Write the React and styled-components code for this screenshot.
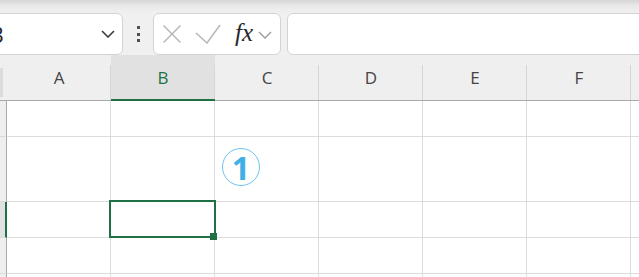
import React from 'react';
import styled, { createGlobalStyle } from 'styled-components';

const GlobalStyle = createGlobalStyle`
  html, body {
    margin: 0;
    padding: 0;
    background: #f0f0f0;
  }
  body {
    font-family: 'Open Sans', 'Liberation Sans', sans-serif;
  }
`;

const GREEN = '#1f7145';
const COLUMNS = ['A', 'B', 'C', 'D', 'E', 'F', 'G'];
const ROWS = [
  { height: 36 },
  { height: 65, note: 'C' },
  { height: 36, selected: 'B' },
  { height: 36 },
  { height: 36 },
];

function App() {
  return (
    <>
      <GlobalStyle />
      <Page>
        <TopShade />
        <FormulaBar>
          <NameBox>
            <span>B3</span>
            <svg width="14" height="8" viewBox="0 0 14 8">
              <path d="M1 1l6 6 6-6" fill="none" stroke="#3c3c3c" strokeWidth="1.6" />
            </svg>
          </NameBox>
          <Dots>
            <i />
            <i />
            <i />
          </Dots>
          <FuncBox>
            <svg width="20" height="20" viewBox="0 0 20 20">
              <path d="M1.5 1.5l17 17M18.5 1.5l-17 17" stroke="#b4b4b4" strokeWidth="1.4" fill="none" />
            </svg>
            <svg width="26" height="20" viewBox="0 0 26 20">
              <path d="M1 9l11 10L25 1" stroke="#b4b4b4" strokeWidth="1.4" fill="none" />
            </svg>
            <Fx>fx</Fx>
            <svg width="14" height="8" viewBox="0 0 14 8">
              <path d="M1 1l6 6 6-6" fill="none" stroke="#9a9a9a" strokeWidth="1.3" />
            </svg>
          </FuncBox>
          <FormulaInput />
        </FormulaBar>
        <Sheet>
          <Corner>
            <CornerEdge />
          </Corner>
          {COLUMNS.map((c, i) => (
            <ColHeader key={c} $active={c === 'B'}>
              {i < COLUMNS.length - 1 ? c : ''}
            </ColHeader>
          ))}
          {ROWS.map((row, r) => (
            <React.Fragment key={r}>
              <RowHeader $h={row.height} $active={!!row.selected} />
              {COLUMNS.map((c) => (
                <Cell key={c} $h={row.height}>
                  {row.selected === c && (
                    <Selection>
                      <Handle />
                    </Selection>
                  )}
                  {row.note === c && <Badge>1</Badge>}
                </Cell>
              ))}
            </React.Fragment>
          ))}
        </Sheet>
      </Page>
    </>
  );
}

export default App;

const Page = styled.div`
  width: 639px;
  height: 277px;
  overflow: hidden;
  background: #f0f0f0;
`;

const TopShade = styled.div`
  height: 13px;
  background: linear-gradient(#d6d6d6, #e9e9e9 6px, #efefef 12px);
`;

const FormulaBar = styled.div`
  display: flex;
  height: 42px;
  box-sizing: border-box;
`;

const Box = styled.div`
  box-sizing: border-box;
  height: 42px;
  background: #fff;
  border: 1px solid #d3d3d3;
  border-radius: 6px;
`;

const NameBox = styled(Box)`
  width: 163px;
  margin-left: -40px;
  padding: 0 7px 0 16px;
  display: flex;
  align-items: center;
  justify-content: space-between;
  font-size: 22px;
  color: #262626;
`;

const Dots = styled.div`
  width: 30px;
  display: flex;
  flex-direction: column;
  align-items: center;
  justify-content: center;
  gap: 3.5px;

  i {
    width: 3px;
    height: 3px;
    background: #505050;
  }
`;

const FuncBox = styled(Box)`
  width: 128px;
  display: flex;
  align-items: center;
  padding-left: 8px;

  svg:nth-child(2) {
    margin-left: 13px;
  }
  svg:last-child {
    margin-left: 5px;
    margin-top: 1px;
  }
`;

const Fx = styled.span`
  margin-left: 14px;
  font-family: 'Liberation Serif', 'DejaVu Serif', serif;
  font-style: italic;
  font-size: 25px;
  color: #262626;
  margin-top: -3px;
`;

const FormulaInput = styled(Box)`
  flex: 1;
  margin-left: 6px;
  margin-right: -12px;
`;

const Sheet = styled.div`
  display: grid;
  grid-template-columns: 7px repeat(7, 104px);
  background: #fff;
`;

const Corner = styled.div`
  box-sizing: border-box;
  height: 46px;
  background: #efefef;
  border-bottom: 1px solid #a9a9a9;
  padding-top: 13px;
`;

const CornerEdge = styled.div`
  width: 3px;
  height: 29px;
  background: #dcdcdc;
`;

const ColHeader = styled.div`
  position: relative;
  box-sizing: border-box;
  height: 46px;
  display: flex;
  align-items: center;
  justify-content: center;
  padding-top: ${({ $active }) => ($active ? '1px' : '0')};
  background: ${({ $active }) => ($active ? '#e1e1e1' : '#efefef')};
  border-bottom: ${({ $active }) => ($active ? `2px solid ${GREEN}` : '1px solid #a9a9a9')};
  color: ${({ $active }) => ($active ? GREEN : '#444')};
  font-size: 17px;

  &::after {
    content: '';
    position: absolute;
    right: 0;
    top: 10px;
    bottom: 0;
    width: 1px;
    background: #d6d6d6;
  }
`;

const RowHeader = styled.div`
  box-sizing: border-box;
  height: ${({ $h }) => $h}px;
  background: ${({ $active }) => ($active ? '#e1e1e1' : '#efefef')};
  border-right: ${({ $active }) => ($active ? `2px solid ${GREEN}` : '1px solid #a9a9a9')};
  border-bottom: 1px solid #dadada;
`;

const Cell = styled.div`
  position: relative;
  box-sizing: border-box;
  height: ${({ $h }) => $h}px;
  border-right: 1px solid #dcdcdc;
  border-bottom: 1px solid #dcdcdc;
`;

const Selection = styled.div`
  position: absolute;
  left: -2px;
  top: -2px;
  right: -2px;
  bottom: -1px;
  border: 2px solid ${GREEN};
  z-index: 2;
`;

const Handle = styled.div`
  position: absolute;
  right: -3px;
  bottom: -4px;
  width: 7px;
  height: 7px;
  background: ${GREEN};
`;

const Badge = styled.div`
  position: absolute;
  left: 7px;
  top: 11px;
  box-sizing: border-box;
  width: 38px;
  height: 38px;
  border: 1.5px solid #6cc4ee;
  border-radius: 50%;
  display: flex;
  align-items: center;
  justify-content: center;
  padding-top: 1px;
  font-family: 'Open Sans', 'Liberation Sans', sans-serif;
  font-weight: 700;
  font-size: 32px;
  line-height: 1;
  color: #3fb0e6;
`;
